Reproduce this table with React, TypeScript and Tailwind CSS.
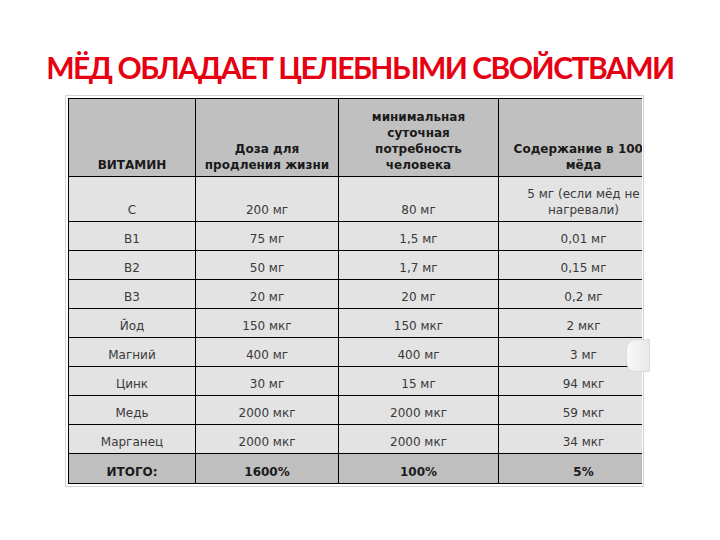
import type { ReactNode } from "react";

type Row = { name: string; dose: string; min: string; honey: ReactNode; tall?: boolean };

const rows: Row[] = [
  { name: "С", dose: "200 мг", min: "80 мг", honey: <>5 мг (если мёд не<br />нагревали)</>, tall: true },
  { name: "В1", dose: "75 мг", min: "1,5 мг", honey: "0,01 мг" },
  { name: "В2", dose: "50 мг", min: "1,7 мг", honey: "0,15 мг" },
  { name: "В3", dose: "20 мг", min: "20 мг", honey: "0,2 мг" },
  { name: "Йод", dose: "150 мкг", min: "150 мкг", honey: "2 мкг" },
  { name: "Магний", dose: "400 мг", min: "400 мг", honey: "3 мг" },
  { name: "Цинк", dose: "30 мг", min: "15 мг", honey: "94 мкг" },
  { name: "Медь", dose: "2000 мкг", min: "2000 мкг", honey: "59 мкг" },
  { name: "Марганец", dose: "2000 мкг", min: "2000 мкг", honey: "34 мкг" },
];

function Cell({ children, bold }: { children: ReactNode; bold?: boolean }) {
  return (
    <td
      className={
        "border border-black px-1 pb-[3px] align-bottom text-center leading-[16px] " +
        (bold ? "font-bold text-[#1a1a1a]" : "text-[#3a3a3a]")
      }
    >
      {children}
    </td>
  );
}

export default function App() {
  return (
    <div className="relative h-[540px] w-[720px] overflow-hidden bg-white">
      <h1 className="pt-[47px] text-center font-['Lato',sans-serif] text-[30px] font-bold leading-[40px] tracking-[-1.5px] text-[#e60012]">
        МЁД ОБЛАДАЕТ ЦЕЛЕБНЫМИ СВОЙСТВАМИ
      </h1>

      <div className="ml-[65px] mt-[8px] w-[579px] border border-[#d4d4d4] pl-[2px] pt-[2px] pb-[2px]">
        <div className="w-[574px] overflow-hidden">
          <table className="w-[600px] table-fixed border-collapse font-['DejaVu_Sans',sans-serif] text-[12px]">
            <colgroup>
              <col className="w-[127px]" />
              <col className="w-[143px]" />
              <col className="w-[160px]" />
              <col className="w-[170px]" />
            </colgroup>
            <tbody>
              <tr className="h-[78px] bg-[#c0c0c0]">
                <Cell bold>ВИТАМИН</Cell>
                <Cell bold>Доза для<br />продления жизни</Cell>
                <Cell bold>минимальная<br />суточная<br />потребность<br />человека</Cell>
                <Cell bold><span className="whitespace-nowrap">Содержание в 100 г</span><br />мёда</Cell>
              </tr>
              {rows.map((r) => (
                <tr key={r.name} className={(r.tall ? "h-[45px]" : "h-[29px]") + " bg-[#e3e3e3]"}>
                  <Cell>{r.name}</Cell>
                  <Cell>{r.dose}</Cell>
                  <Cell>{r.min}</Cell>
                  <Cell>{r.honey}</Cell>
                </tr>
              ))}
              <tr className="h-[30px] bg-[#bfbfbf]">
                <Cell bold>ИТОГО:</Cell>
                <Cell bold>1600%</Cell>
                <Cell bold>100%</Cell>
                <Cell bold>5%</Cell>
              </tr>
            </tbody>
          </table>
        </div>
      </div>

      <div className="absolute left-[626px] top-[339px] h-[33px] w-[24px] rounded-l-[10px] border border-[#dcdcdc] bg-gradient-to-r from-[#fafafa] to-[#e8e8e8]" />
    </div>
  );
}
